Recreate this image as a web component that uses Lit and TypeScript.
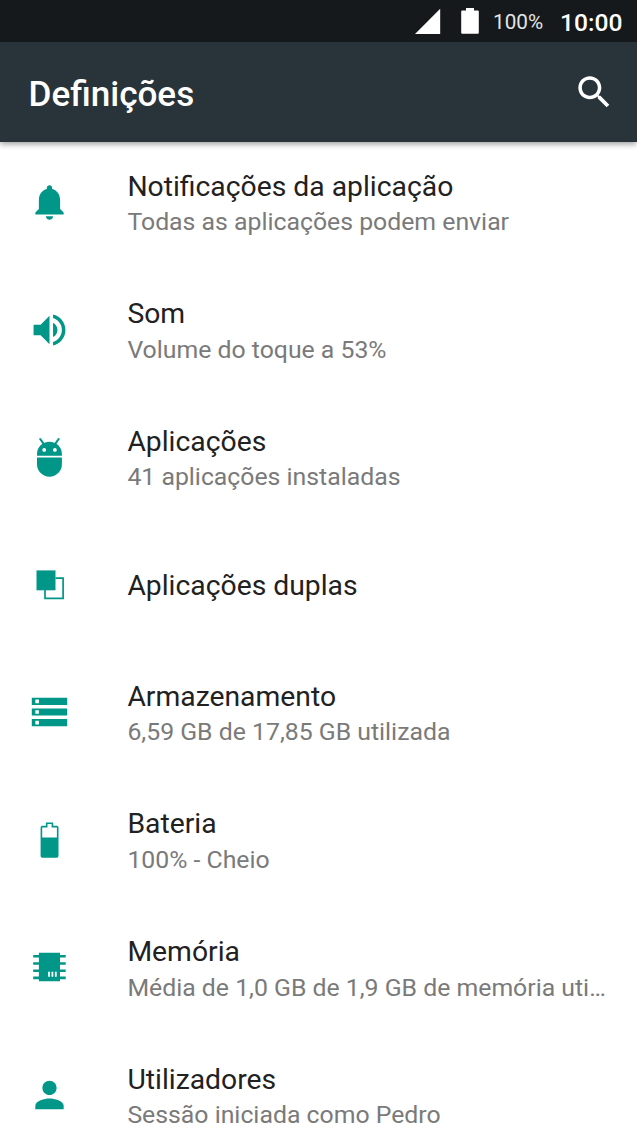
import { LitElement, html, css, svg, nothing } from "lit";
import { customElement, property } from "lit/decorators.js";

const material = (d: string) =>
  svg`<path transform="scale(1.77) translate(-12 -12)" d=${d} />`;

// Glyphs are drawn around the origin of a 60 x 60 box.
const icons: Record<string, unknown> = {
  bell: material(
    "M12 22c1.1 0 2-.9 2-2h-4c0 1.1.89 2 2 2zm6-6v-5c0-3.07-1.64-5.64-4.5-6.32V4c0-.83-.67-1.5-1.5-1.5s-1.5.67-1.5 1.5v.68C7.63 5.36 6 7.92 6 11v5l-2 2v1h16v-1l-2-2z"
  ),
  volume: material(
    "M3 9v6h4l5 5V4L7 9H3zm13.500 3c0-1.770-1.020-3.290-2.500-4.030v8.050c1.480-.730 2.500-2.250 2.500-4.020zM14 3.230v2.060c2.890.860 5 3.540 5 6.710s-2.110 5.850-5 6.710v2.060c4.010-.910 7-4.490 7-8.770s-2.990-7.860-7-8.770z"
  ),
  android: svg`
    <path d="M-12.500 .4H12.400V7.200A12.450 12.450 0 0 1-12.500 7.200Z" />
    <path fill-rule="evenodd" d="M-12.500-1.300V-3A12.450 12.200 0 0 1 12.400-3V-1.300ZM-7.200-7.100a1.900 1.900 0 1 0 3.800 0a1.900 1.900 0 1 0-3.800 0ZM3.500-7.100a1.900 1.900 0 1 0 3.800 0a1.900 1.900 0 1 0-3.800 0Z" />
    <path d="M-9.300-18L-5.800-13.200M9.200-18L5.700-13.200" fill="none" stroke="currentColor" stroke-width="2.100" stroke-linecap="round" />`,
  dual: svg`
    <path d="M-13-14.600H6V5.300H-13Z" />
    <path d="M6-6.800H13.600V13.300H-4.500V5" fill="none" stroke="currentColor" stroke-width="1.700" />`,
  storage: material(
    "M2 20h20v-4H2v4zm2-3h2v2H4v-2zM2 4v4h20V4H2zm4 3H4V5h2v2zm-4 7h20v-4H2v4zm2-3h2v2H4v-2z"
  ),
  battery: svg`
    <path fill-rule="evenodd" d="M-3.600-17.600H3.700V-14.200H7.300Q9-14.200 9-12.500V16Q9 17.700 7.300 17.700H-7.200Q-8.900 17.700-8.900 16V-12.500Q-8.900-14.200-7.200-14.200H-3.600ZM-2-16V-12.600H-7.300V-2.500H7.400V-12.600H2.100V-16Z" />`,
  memory: svg`
    <path fill-rule="evenodd" d="M-10.600-14.300H10.500V14.300H-10.600ZM-1.400 4.700V9.700H.4V4.700ZM2 4.700V9.700H3.800V4.700ZM5.400 4.700V9.700H7.200V4.700Z" />
    <path d="M-16.300-10.700H-10M-16.300-3.500H-10M-16.300 3.700H-10M-16.300 10.900H-10M10-10.700H16.200M10-3.500H16.200M10 3.700H16.200M10 10.900H16.200" fill="none" stroke="currentColor" stroke-width="2.600" />`,
  user: material(
    "M12 12c2.210 0 4-1.790 4-4s-1.790-4-4-4-4 1.790-4 4 1.790 4 4 4zm0 2c-2.670 0-8 1.340-8 4v2h16v-2c0-2.660-5.330-4-8-4z"
  ),
};

@customElement("settings-row")
class SettingsRow extends LitElement {
  @property() icon = "";
  @property() label = "";
  @property() summary = "";

  static styles = css`
    :host {
      display: flex;
      align-items: center;
      height: 127.55px;
      padding: 0 24px 0 19px;
      box-sizing: border-box;
    }
    .icon {
      flex: none;
      width: 60px;
      height: 60px;
      margin: 0 48.400px 2px 0;
      fill: currentColor;
      color: #009688;
    }
    .text {
      flex: 1;
      min-width: 0;
      display: flex;
      flex-direction: column;
      gap: 4.500px;
    }
    .label,
    .summary {
      white-space: nowrap;
    }
    .label {
      font-size: 28.3px;
      line-height: 33px;
      color: #212121;
    }
    .summary {
      font-size: 24.8px;
      line-height: 29px;
      color: #7a7a7a;
    }
  `;

  render() {
    return html`
      <svg class="icon" viewBox="-30.5 -30 60 60">${icons[this.icon]}</svg>
      <div class="text">
        <div class="label">${this.label}</div>
        ${this.summary ? html`<div class="summary">${this.summary}</div>` : nothing}
      </div>
    `;
  }
}

const rows = [
  ["bell", "Notificações da aplicação", "Todas as aplicações podem enviar"],
  ["volume", "Som", "Volume do toque a 53%"],
  ["android", "Aplicações", "41 aplicações instaladas"],
  ["dual", "Aplicações duplas", ""],
  ["storage", "Armazenamento", "6,59 GB de 17,85 GB utilizada"],
  ["battery", "Bateria", "100% - Cheio"],
  ["memory", "Memória", "Média de 1,0 GB de 1,9 GB de memória uti…"],
  ["user", "Utilizadores", "Sessão iniciada como Pedro"],
];

@customElement("app-root")
class AppRoot extends LitElement {
  static styles = css`
    :host {
      display: flex;
      flex-direction: column;
      height: 1134px;
      overflow: hidden;
      background: #fff;
      font-family: Roboto, "Noto Sans", sans-serif;
    }
    .status {
      flex: none;
      display: flex;
      align-items: center;
      justify-content: flex-end;
      height: 42px;
      padding-right: 14.500px;
      box-sizing: border-box;
      background: #15191b;
      color: #fff;
      z-index: 2;
    }
    .signal {
      width: 26px;
      height: 26px;
      margin-right: 20.500px;
      fill: #fff;
    }
    .battery {
      width: 18px;
      height: 26px;
      margin-right: 14px;
      fill: #fff;
    }
    .percent {
      font-size: 20.700px;
      margin: 1px 17px 0 0;
      color: #e4e5e5;
    }
    .time {
      margin-top: 2px;
      font-size: 24.600px;
      font-weight: 500;
    }
    .bar {
      flex: none;
      display: flex;
      align-items: center;
      justify-content: space-between;
      height: 99.500px;
      padding: 0 21.500px 0 28.500px;
      box-sizing: border-box;
      background: #28333a;
      color: #fff;
      z-index: 1;
      box-shadow: 0 2px 6px rgba(0, 0, 0, 0.4);
    }
    .title {
      margin: 5px 0 0;
      font-size: 35.100px;
      line-height: 42px;
      font-weight: 500;
    }
    .search {
      width: 42.500px;
      height: 42.500px;
      fill: #fff;
    }
    .list {
      flex: 1;
      min-height: 0;
      margin-top: -2.300px;
      overflow: hidden;
    }
  `;

  render() {
    return html`
      <div class="status">
        <svg class="signal" viewBox="0 0 26 26"><path d="M25.200 .8V26H0Z" /></svg>
        <svg class="battery" viewBox="0 0 18 26">
          <path d="M5 0h8v2.500h3.800q1 0 1 1V24.800q0 1-1 1H1.200q-1 0-1-1V3.500q0-1 1-1H5Z" />
        </svg>
        <span class="percent">100%</span>
        <span class="time">10:00</span>
      </div>
      <header class="bar">
        <h1 class="title">Definições</h1>
        <svg class="search" viewBox="0 0 24 24">
          <path d="M15.500 14h-.790l-.280-.270C15.410 12.590 16 11.110 16 9.500 16 5.910 13.090 3 9.500 3S3 5.910 3 9.500 5.910 16 9.500 16c1.610 0 3.090-.590 4.230-1.570l.270.280v.790l5 4.990L20.490 19l-4.990-5zm-6 0C7.010 14 5 11.990 5 9.500S7.010 5 9.500 5 14 7.010 14 9.500 11.990 14 9.500 14z" />
        </svg>
      </header>
      <main class="list">
        ${rows.map(
          ([icon, label, summary]) =>
            html`<settings-row .icon=${icon} .label=${label} .summary=${summary}></settings-row>`
        )}
      </main>
    `;
  }
}
